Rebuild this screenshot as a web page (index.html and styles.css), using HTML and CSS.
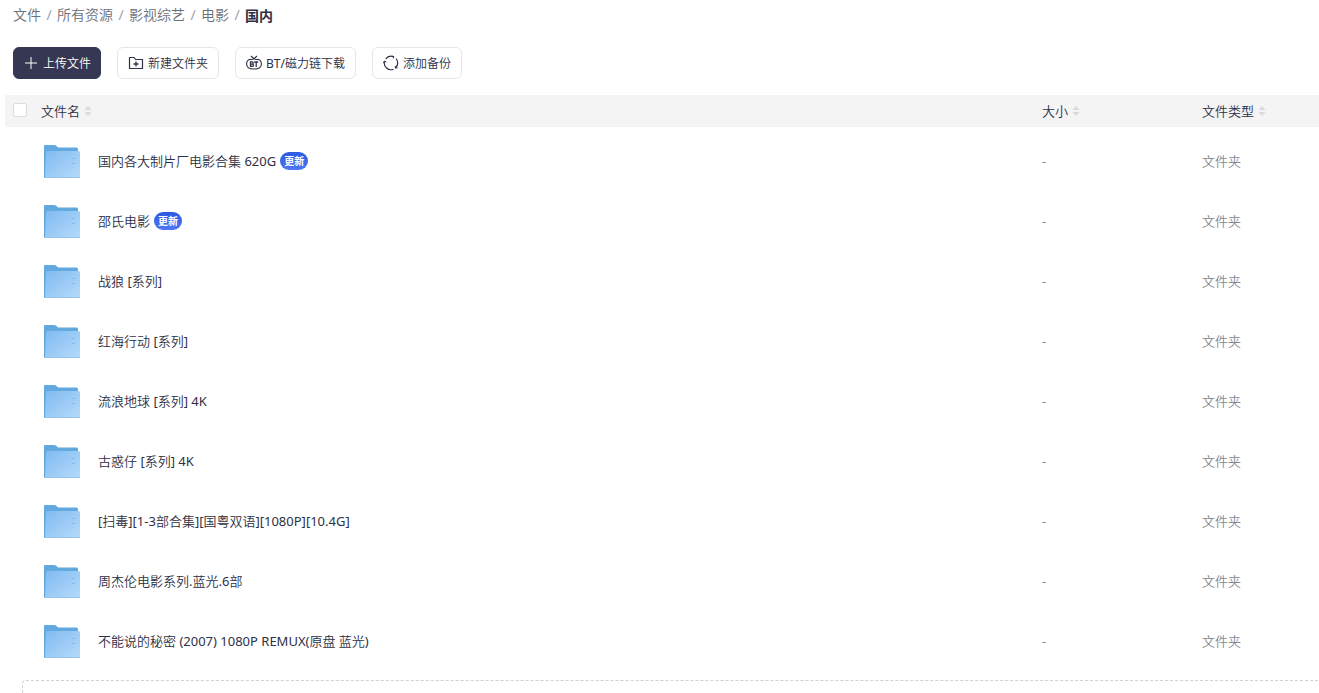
FILE: index.html
```html
<!DOCTYPE html>
<html lang="zh-CN">
<head>
<meta charset="utf-8">
<title>国内</title>
<link rel="stylesheet" href="styles.css">
</head>
<body>
<svg class="defs" aria-hidden="true">
  <defs>
    <linearGradient id="folder-fill" x1="0" y1="0" x2="1" y2="1">
      <stop offset="0" stop-color="#80bbf1"/>
      <stop offset="1" stop-color="#b6dafb"/>
    </linearGradient>
    <symbol id="folder" viewBox="0 0 36 34">
      <path d="M0 2Q0 1 1 1H10Q11.500 1 12.500 2L14 3.500H32.500Q34 3.500 34 5V34H0Z" fill="#62a9e0"/>
      <path d="M2 8Q2 7 3.500 7H34.500Q36 7 36 8.500V34H1Z" fill="url(#folder-fill)"/>
      <path d="M0 33.500H36" stroke="#93c3ec" stroke-width="1"/>
      <path d="M28 14.500h3M28 19.500h3" stroke="#84b9ea" stroke-width="1"/>
    </symbol>
    <symbol id="sort" viewBox="0 0 8 10">
      <path d="M4 0L7.500 4H.5Z M4 10L7.500 6H.5Z" fill="#d9dadd"/>
    </symbol>
  </defs>
</svg>

<nav class="breadcrumb" aria-label="路径">
  <a href="#">文件</a><span class="slash">/</span><a href="#">所有资源</a><span class="slash">/</span><a href="#">影视综艺</a><span class="slash">/</span><a href="#">电影</a><span class="slash">/</span><b>国内</b>
</nav>

<div class="toolbar">
  <button class="btn btn-primary" type="button">
    <svg class="icon" viewBox="0 0 16 16"><path d="M8 2v12M2 8h12" stroke="currentColor" fill="none"/></svg><span>上传文件</span>
  </button>
  <button class="btn" type="button">
    <svg class="icon" viewBox="0 0 16 16"><path d="M1.500 2.500H6L7.500 4.500H14.500V13.500H1.500Z" stroke="currentColor" stroke-width="1.200" stroke-linejoin="round" fill="none"/><path d="M8 6.500v5M5.500 9h5" stroke="currentColor" stroke-width="1.300"/></svg><span>新建文件夹</span>
  </button>
  <button class="btn" type="button">
    <svg class="icon" viewBox="0 0 16 16"><path d="M4.500 4.200C1.800 4.600.6 6.600.6 8.900C.6 12 3 14 8 14S15.400 12 15.400 8.900C15.400 6.600 14.200 4.600 11.500 4.200M4.500 4.700Q8 3.200 11.500 4.700M5 1l3 2.700L11 1" stroke="currentColor" stroke-width="1.100" fill="none"/><path d="M4.500 6.900V11.400H6.200Q7.400 11.400 7.400 10.200Q7.400 9.200 6.500 9.100Q7.200 8.900 7.200 8Q7.200 6.900 6.200 6.900ZM4.500 9.100H6.500M8.200 7H12.200M10.200 7V12" stroke="currentColor" stroke-width="1.300" fill="none"/></svg><span>BT/磁力链下载</span>
  </button>
  <button class="btn" type="button">
    <svg class="icon" viewBox="0 0 16 16"><path d="M10.500 14.200A6.700 6.700 0 0 1 1.500 6.300M2.700 3.900A6.700 6.700 0 0 1 10.800 1.900M13.100 3.700A6.700 6.700 0 0 1 12.600 12.900" stroke="currentColor" stroke-width="1.200" fill="none"/><path d="M.4 8L1.500 6L3.400 7.200M14.600 12.800L12.400 13.100L12.300 11M10.200 3.400L10.900 1.900L9.400 1" stroke="currentColor" fill="none"/></svg><span>添加备份</span>
  </button>
</div>

<table class="files">
  <colgroup><col class="col-check"><col><col class="col-size"><col class="col-type"></colgroup>
  <thead>
    <tr>
      <th><input class="check" type="checkbox" aria-label="全选"></th>
      <th><span class="sortable">文件名<svg class="sort"><use href="#sort"/></svg></span></th>
      <th><span class="sortable">大小<svg class="sort"><use href="#sort"/></svg></span></th>
      <th><span class="sortable">文件类型<svg class="sort"><use href="#sort"/></svg></span></th>
    </tr>
  </thead>
  <tbody>
    <tr><td></td><td><div class="name"><svg class="folder"><use href="#folder"/></svg><span>国内各大制片厂电影合集 620G</span><span class="badge">更新</span></div></td><td>-</td><td>文件夹</td></tr>
    <tr><td></td><td><div class="name"><svg class="folder"><use href="#folder"/></svg><span>邵氏电影</span><span class="badge">更新</span></div></td><td>-</td><td>文件夹</td></tr>
    <tr><td></td><td><div class="name"><svg class="folder"><use href="#folder"/></svg><span>战狼 [系列]</span></div></td><td>-</td><td>文件夹</td></tr>
    <tr><td></td><td><div class="name"><svg class="folder"><use href="#folder"/></svg><span>红海行动 [系列]</span></div></td><td>-</td><td>文件夹</td></tr>
    <tr><td></td><td><div class="name"><svg class="folder"><use href="#folder"/></svg><span>流浪地球 [系列] 4K</span></div></td><td>-</td><td>文件夹</td></tr>
    <tr><td></td><td><div class="name"><svg class="folder"><use href="#folder"/></svg><span>古惑仔 [系列] 4K</span></div></td><td>-</td><td>文件夹</td></tr>
    <tr><td></td><td><div class="name"><svg class="folder"><use href="#folder"/></svg><span>[扫毒][1-3部合集][国粤双语][1080P][10.4G]</span></div></td><td>-</td><td>文件夹</td></tr>
    <tr><td></td><td><div class="name"><svg class="folder"><use href="#folder"/></svg><span>周杰伦电影系列.蓝光.6部</span></div></td><td>-</td><td>文件夹</td></tr>
    <tr><td></td><td><div class="name"><svg class="folder"><use href="#folder"/></svg><span>不能说的秘密 (2007) 1080P REMUX(原盘 蓝光)</span></div></td><td>-</td><td>文件夹</td></tr>
  </tbody>
</table>
<div class="dropzone"></div>
</body>
</html>
```

FILE: styles.css
```css
* {
  box-sizing: border-box;
}

body {
  margin: 0;
  height: 100vh;
  overflow: hidden;
  display: flex;
  flex-direction: column;
  background: #fff;
  color: #2d3044;
  font: 13px/20px "Noto Sans", "Noto Sans CJK SC DemiLight", "Noto Sans CJK SC", sans-serif;
}

.defs {
  position: absolute;
  width: 0;
  height: 0;
}

.breadcrumb {
  display: flex;
  padding: 5px 13px;
  font-size: 14px;
}

.breadcrumb a {
  color: #6c6e78;
  text-decoration: none;
}

.breadcrumb b {
  font-family: "Noto Sans CJK SC", sans-serif;
}

.slash {
  width: 16px;
  text-align: center;
  color: #a0a2aa;
}

.toolbar {
  display: flex;
  gap: 16px;
  padding: 17px 13px 16px;
}

.btn {
  display: flex;
  align-items: center;
  gap: 4px;
  height: 32px;
  padding: 0 10px;
  border: 1px solid #e6e7ea;
  border-radius: 6px;
  background: #fff;
  color: #2d3044;
  font: inherit;
  font-size: 12px;
  white-space: nowrap;
}

.btn span {
  padding-top: 2px;
}

.btn-primary {
  padding: 0 9px;
  border-color: #363853;
  background: #363853;
  color: #fff;
}

.icon {
  flex: none;
  width: 16px;
  height: 16px;
}

.files {
  flex: none;
  margin-left: 5px;
  border-collapse: collapse;
  table-layout: fixed;
}

.col-check {
  width: 36px;
}

.col-size {
  width: 160px;
}

.col-type {
  width: 117px;
}

.files th {
  height: 32px;
  padding: 0;
  background: #f4f4f5;
  font-weight: 400;
  text-align: left;
}

.files td {
  height: 60px;
  padding: 8px 0 0;
  color: #85878f;
}

.check {
  display: block;
  appearance: none;
  width: 14px;
  height: 14px;
  margin: 0 8px 2px;
  border: 1px solid #dcdde0;
  border-radius: 2px;
  background: #fff;
}

.sortable {
  display: flex;
  align-items: center;
  gap: 4px;
}

.sort {
  width: 8px;
  height: 10px;
}

.files .name {
  display: flex;
  align-items: center;
  padding-left: 3px;
  color: #2d3044;
}

.folder {
  flex: none;
  width: 36px;
  height: 34px;
  margin-right: 18px;
}

.badge {
  margin-left: 4px;
  padding: 0 4px;
  border-radius: 9px;
  background: linear-gradient(#2b5be0, #4f76f5);
  color: #fff;
  font-family: "Noto Sans CJK SC", sans-serif;
  font-size: 10px;
  font-weight: 700;
  line-height: 18px;
}

.dropzone {
  flex: 1;
  margin: 13px 0 0 22px;
  border: 1px dashed #d0d1d5;
  border-width: 1px 0 0 1px;
  border-top-left-radius: 4px;
}
```
